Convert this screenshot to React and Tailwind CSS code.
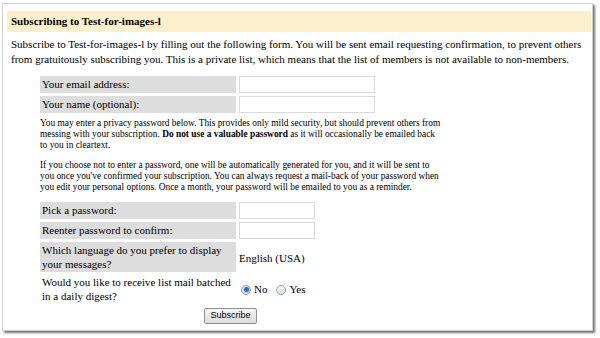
import React from 'react';

const serif = { fontFamily: '"Liberation Serif", "Times New Roman", serif' };

function Radio({ checked }) {
  return (
    <span className="inline-flex w-[10px] h-[10px] rounded-full border border-[#9aa3ad] bg-gradient-to-b from-[#f4f4f4] to-[#d9dde2] items-center justify-center align-middle">
      {checked && <span className="w-[5px] h-[5px] rounded-full bg-[#2a6fd0] shadow-[0_0_2px_#6aa8f0]" />}
    </span>
  );
}

function LabelCell({ children, twoLines }) {
  return (
    <td className={`w-[196px] bg-[#dddddd] px-[2px] align-middle ${twoLines ? 'h-[30px] leading-[14px]' : 'h-[17px] leading-[15px]'}`}>
      {children}
    </td>
  );
}

function TextInput({ width }) {
  return <div className={`${width} h-[17px] bg-white border border-[#dadada]`} />;
}

export default function App() {
  return (
    <div className="w-[600px] h-[338px] bg-white text-black overflow-hidden" style={serif}>
      <div className="ml-[2px] mt-[3px] w-[591px] h-[328px] bg-white border border-[#d0d0d0] shadow-[2px_2px_2px_rgba(0,0,0,0.55)] pt-[7px]">
        {/* Header */}
        <div className="ml-[4px] mr-[1px] h-[21px] bg-[#fcefcb] flex items-center px-[4px]">
          <span className="text-[11px] font-bold">Subscribing to Test-for-images-l</span>
        </div>

        {/* Intro */}
        <p className="ml-[8px] mt-[5px] text-[11px] leading-[15px] w-[580px]">
          Subscribe to Test-for-images-l by filling out the following form. You will be sent email requesting confirmation, to prevent others
          from gratuitously subscribing you. This is a private list, which means that the list of members is not available to non-members.
        </p>

        {/* Form */}
        <table className="ml-[34px] mt-[6px] w-[387px] table-fixed border-separate border-spacing-[3px] text-[11px]">
          <colgroup>
            <col className="w-[196px]" />
            <col />
          </colgroup>
          <tbody>
            <tr>
              <LabelCell>Your email address:</LabelCell>
              <td className="p-0"><TextInput width="w-[136px]" /></td>
            </tr>
            <tr>
              <LabelCell>Your name (optional):</LabelCell>
              <td className="p-0"><TextInput width="w-[136px]" /></td>
            </tr>
            <tr>
              <td colSpan={2} className="p-0 text-[9.4px] leading-[11px] whitespace-nowrap">
                <p className="mt-[2px]">
                  You may enter a privacy password below. This provides only mild security, but should prevent others from<br />
                  messing with your subscription. <b>Do not use a valuable password</b> as it will occasionally be emailed back<br />
                  to you in cleartext.
                </p>
                <p className="mt-[9px] mb-[6px]">
                  If you choose not to enter a password, one will be automatically generated for you, and it will be sent to<br />
                  you once you've confirmed your subscription. You can always request a mail-back of your password when<br />
                  you edit your personal options. Once a month, your password will be emailed to you as a reminder.
                </p>
              </td>
            </tr>
            <tr>
              <LabelCell>Pick a password:</LabelCell>
              <td className="p-0"><TextInput width="w-[76px]" /></td>
            </tr>
            <tr>
              <LabelCell>Reenter password to confirm:</LabelCell>
              <td className="p-0"><TextInput width="w-[76px]" /></td>
            </tr>
            <tr>
              <LabelCell twoLines>Which language do you prefer to display your messages?</LabelCell>
              <td className="p-0 align-middle pt-[2px]">English (USA)</td>
            </tr>
            <tr>
              <td className="px-[2px] h-[28px] leading-[14px] align-middle">Would you like to receive list mail batched in a daily digest?</td>
              <td className="p-0 align-middle">
                <span className="inline-flex items-center gap-[3px] ml-[2px]">
                  <Radio checked />
                  <span>No</span>
                  <span className="w-[3px]" />
                  <Radio />
                  <span>Yes</span>
                </span>
              </td>
            </tr>
            <tr>
              <td colSpan={2} className="p-0 text-center">
                <button
                  className="w-[53px] h-[16px] border border-[#8e8e8e] rounded-[2px] bg-gradient-to-b from-[#f6f6f6] to-[#dcdcdc] text-[9px] leading-none"
                  style={{ fontFamily: '"Liberation Sans", Arial, sans-serif' }}
                >
                  Subscribe
                </button>
              </td>
            </tr>
          </tbody>
        </table>
      </div>
    </div>
  );
}
